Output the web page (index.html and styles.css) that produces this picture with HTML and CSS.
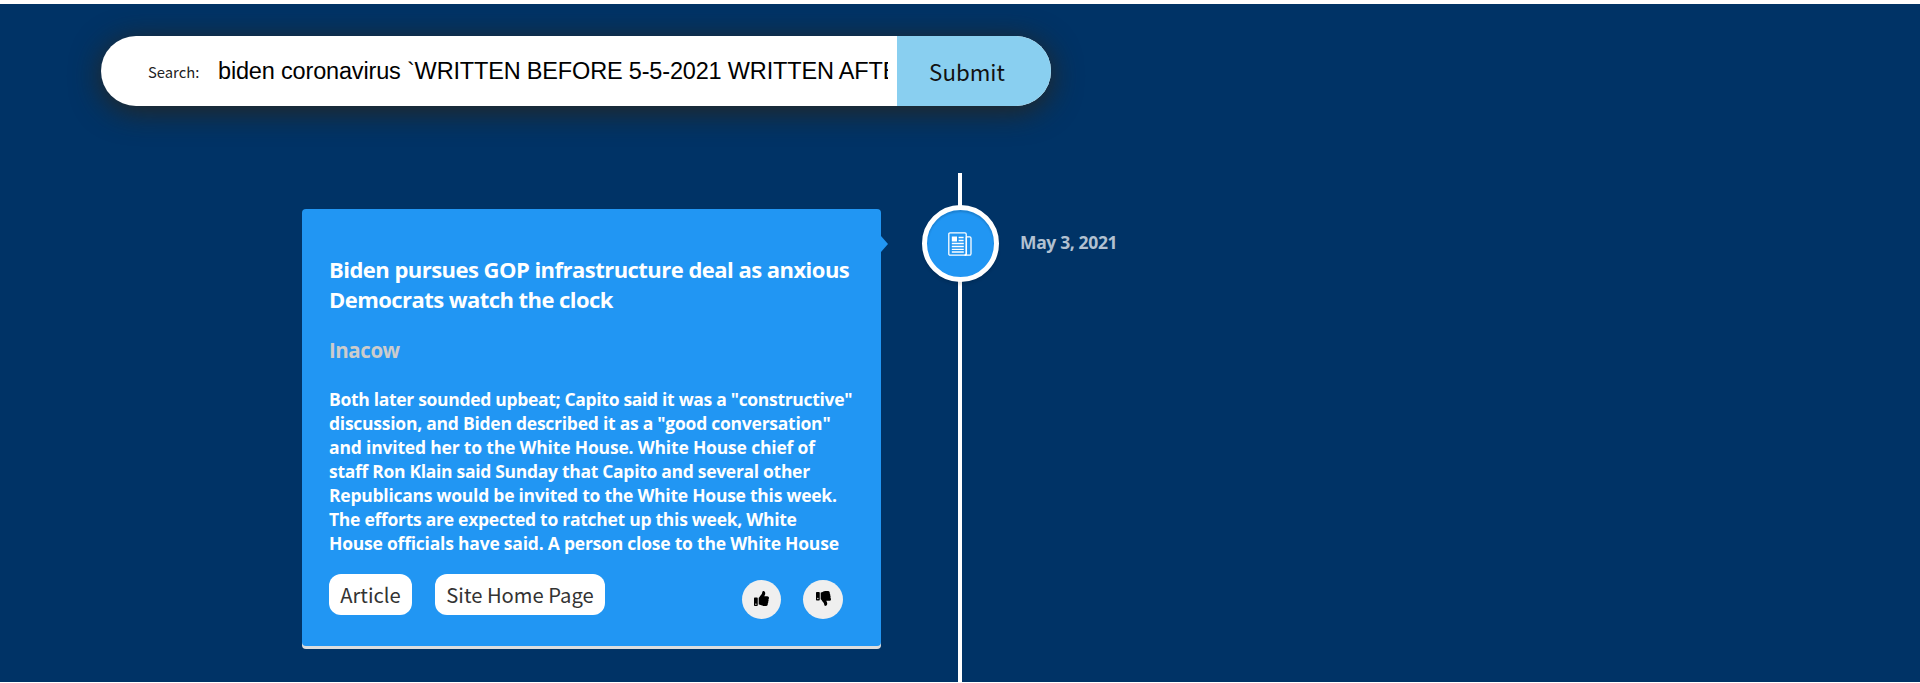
FILE: index.html
```html
<!DOCTYPE html>
<html lang="en">
<head>
<meta charset="utf-8">
<title>Article Timeline</title>
<link rel="stylesheet" href="styles.css">
</head>
<body>
<main class="page">
  <form class="search">
    <label class="search-label" for="q">Search:</label>
    <input class="search-input" id="q" type="text" value="biden coronavirus `WRITTEN BEFORE 5-5-2021 WRITTEN AFTER 5-1-2021`">
    <button class="search-submit" type="button">Submit</button>
  </form>
  <section class="timeline">
    <article class="card">
      <h3 class="title"><span class="line t1">Biden pursues GOP infrastructure deal as anxious</span><span class="line t2">Democrats watch the clock</span></h3>
      <h4 class="source">Inacow</h4>
      <p class="excerpt"><span class="line e1">Both later sounded upbeat; Capito said it was a "constructive"</span><span class="line e2">discussion, and Biden described it as a "good conversation"</span><span class="line e3">and invited her to the White House. White House chief of</span><span class="line e4">staff Ron Klain said Sunday that Capito and several other</span><span class="line e5">Republicans would be invited to the White House this week.</span><span class="line e6">The efforts are expected to ratchet up this week, White</span><span class="line e7">House officials have said. A person close to the White House</span></p>
      <div class="actions">
        <a class="link link-article">Article</a>
        <a class="link link-home">Site Home Page</a>
        <button class="vote vote-up" type="button" aria-label="Like"><svg width="15" height="15" viewBox="0 0 512 512"><path d="M104 224H24c-13 0-24 11-24 24v240c0 13 11 24 24 24h80c13 0 24-11 24-24V248c0-13-11-24-24-24zM64 472a24 24 0 1 1 0-48 24 24 0 0 1 0 48zM384 81.500c0 42.400-26 66.200-33.300 94.500h101.700c33.400 0 59.400 27.700 59.600 58.100.1 17.900-7.500 37.200-19.400 49.200 9.900 23.400 8.300 56.300-9.400 79.900 8.700 26-.1 57.900-16.400 75 4.300 17.600 2.200 32.600-6.100 44.600C440.200 511.600 389.600 512 346.800 512H344c-48.300 0-87.800-17.600-119.600-31.700-16-7.100-36.800-15.900-52.700-16.200-6.500-.1-11.800-5.500-11.800-12V238.300c0-3.200 1.300-6.300 3.600-8.500 39.600-39.100 56.600-80.600 89.100-113.100 14.800-14.800 20.200-37.200 25.400-58.900C282.500 39.300 291.800 0 312 0c24 0 72 8 72 81.500z"/></svg></button>
        <button class="vote vote-down" type="button" aria-label="Dislike"><svg width="15" height="15" viewBox="0 0 512 512"><path d="M0 56v240c0 13.300 10.700 24 24 24h80c13.300 0 24-10.700 24-24V56c0-13.300-10.700-24-24-24H24C10.700 32 0 42.700 0 56zm40 200a24 24 0 1 1 48 0 24 24 0 0 1-48 0zm272 256c-20.200 0-29.500-39.300-33.900-57.800-5.200-21.700-10.600-44.100-25.400-58.900-32.500-32.500-49.500-74-89.100-113.100a12 12 0 0 1-3.600-8.500V59.900c0-6.500 5.200-11.900 11.800-12 15.800-.3 36.700-9.100 52.700-16.200C256.200 17.600 295.700 0 344 0h2.800c42.800 0 93.400.4 113.800 29.700 8.400 12.100 10.400 27 6.100 44.600 16.300 17.100 25.100 49 16.400 75 17.700 23.600 19.300 56.500 9.400 79.900 11.900 12 19.500 31.300 19.400 49.200-.2 30.400-26.200 58.100-59.600 58.100H350.700C358 364.800 384 388.600 384 430.500 384 504 336 512 312 512z"/></svg></button>
      </div>
    </article>
    <div class="rail">
      <div class="badge"><svg width="24" height="24" viewBox="0 0 24 24" fill="none" stroke="#fff" stroke-width="1.300"><rect x=".8" y=".8" width="17.400" height="22.400" rx="1.200"/><path d="M18.200 4.900h3.500q1.300 0 1.300 1.300v15.500q0 1.500-1.500 1.500h-4.500"/><path d="M18.400 5v16.500q0 1.700-2 1.700"/><path d="M10.600 5.500h5M10.600 8.500h5M3.800 11.500h12M3.800 14.500h12M3.800 17.300h12M3.800 20h12"/><path d="M3.800 4.500h5.200v5h-5.200z" fill="#fff" stroke="none"/></svg></div>
    </div>
    <time class="date">May 3, 2021</time>
  </section>
</main>
</body>
</html>
```
FILE: styles.css
```css
* { box-sizing: border-box; }
body {
  margin: 0;
  background: #fff;
  font-family: "Open Sans", "Noto Sans", sans-serif;
}
.page {
  height: 678px;
  margin: 4px 0 0;
  padding: 32px 0 0;
  background: #003366;
  overflow: hidden;
}
.search {
  display: flex;
  align-items: stretch;
  width: 950px;
  height: 70px;
  margin-left: 101px;
  border-radius: 35px;
  background: #fff;
  overflow: hidden;
  box-shadow: 0 5px 30px rgba(51, 34, 10, .78);
}
.search-label {
  width: 117px;
  padding: 2px 0 0 47px;
  font: 14.800px/68px "Noto Sans CJK SC", sans-serif;
  color: #222;
  white-space: nowrap;
}
.search-input {
  width: 670px;
  margin-right: 9px;
  padding: 0;
  border: 0;
  outline: 0;
  background: none;
  color: #000;
  font: 23.500px "Liberation Sans", Arial, sans-serif;
  letter-spacing: -.17px;
}
.search-submit {
  flex: 1;
  padding: 0 14px 0 0;
  border: 0;
  background: #89cff0;
  color: #111;
  font: 22.300px/70px "Noto Sans CJK SC", sans-serif;
}
.timeline {
  display: flex;
  align-items: flex-start;
  margin: 67px 0 0 302px;
}
.card {
  position: relative;
  width: 579px;
  height: 437px;
  margin-top: 36px;
  padding: 45px 27px 0;
  border-radius: 4px;
  background: #2196f3;
  box-shadow: 0 3px 0 #ddd;
  color: #fff;
}
.card::after {
  content: "";
  position: absolute;
  left: 100%;
  top: 27px;
  border: 8px solid transparent;
  border-left: 7px solid #2196f3;
  border-right: 0;
}
.line { display: block; white-space: nowrap; }
.title { margin: 0; font-size: 22px; line-height: 30px; font-weight: 700; }
.t1 { letter-spacing: -.53px; }
.t2 { letter-spacing: -.56px; }
.source { margin: 21px 0 0; font-size: 20.500px; line-height: 30px; letter-spacing: -.45px; color: #ccc; }
.excerpt { margin: 22px 0 0; font-size: 17.500px; line-height: 24px; font-weight: 700; }
.e1 { letter-spacing: -.31px; }
.e2 { letter-spacing: -.25px; }
.e3 { letter-spacing: -.18px; }
.e4 { letter-spacing: -.3px; }
.e5 { letter-spacing: -.25px; }
.e6 { letter-spacing: -.27px; }
.e7 { letter-spacing: -.22px; }
.actions { display: flex; align-items: flex-start; margin-top: 19px; }
.link {
  height: 41px;
  border-radius: 12px;
  background: #fff;
  color: #333;
  font: 20.200px/41px "Noto Sans CJK SC", sans-serif;
  text-align: center;
  white-space: nowrap;
}
.link-article { width: 83px; }
.link-home { width: 170px; margin-left: 23px; }
.vote {
  display: flex;
  align-items: center;
  justify-content: center;
  width: 39px;
  height: 39px;
  margin-top: 6px;
  padding: 0 0 2px;
  border: 0;
  border-radius: 50%;
  background: #efefef;
}
.vote-up { margin-left: 137px; }
.vote-down { width: 40px; margin-left: 22px; }
.rail {
  width: 78px;
  height: 520px;
  margin-left: 40px;
  padding-top: 31px;
  background: linear-gradient(#fff, #fff) 37px 0 / 4px 100% no-repeat;
}
.badge {
  display: flex;
  align-items: center;
  justify-content: center;
  width: 77px;
  height: 77px;
  margin: 1px 0 0 .5px;
  border: 5px solid #fff;
  border-radius: 50%;
  background: #2196f3;
  box-shadow: inset 0 2px 2px rgba(0, 0, 0, .15), 0 3px 3px rgba(0, 0, 0, .1);
}
.date {
  margin: 56px 0 0 21px;
  font-size: 17.500px;
  line-height: 26px;
  font-weight: 700;
  letter-spacing: -.36px;
  color: #b2c1d1;
}
```
